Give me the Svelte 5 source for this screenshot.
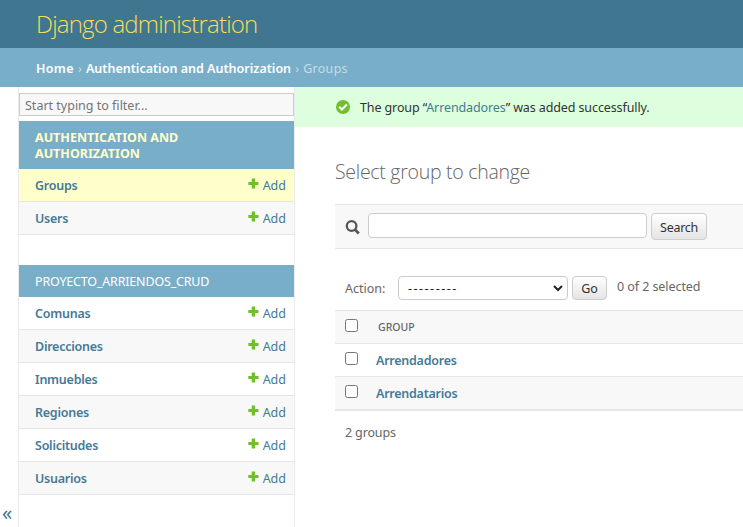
<script>
  const apps = [
    { name: 'Authentication and Authorization', current: true, models: ['Groups', 'Users'] },
    { name: 'proyecto_arriendos_crud', current: false, models: ['Comunas', 'Direcciones', 'Inmuebles', 'Regiones', 'Solicitudes', 'Usuarios'] }
  ];
  const groups = ['Arrendadores', 'Arrendatarios'];
</script>

<div class="page">
  <header><h1>Django administration</h1></header>
  <nav class="crumbs"><b>Home</b><i>›</i><b>Authentication and Authorization</b><i>›</i><span>Groups</span></nav>
  <div class="main">
    <div class="toggle">«</div>
    <aside>
      <input class="filter" placeholder="Start typing to filter..." />
      {#each apps as app}
        <section>
          <h2 class:current={app.current}>{app.name}</h2>
          {#each app.models as model, n}
            <div class="model" class:even={n % 2 === 1} class:selected={model === 'Groups'}>
              <b>{model}</b>
              <span class="add"><svg width="11" height="11" viewBox="0 0 11 11"><path d="M3.7 .5h3.4v3.4h3.4v3.2H7.1v3.4H3.7V7.1H.3V3.9h3.4z" fill="#70bf2b" /></svg><span>Add</span></span>
            </div>
          {/each}
        </section>
      {/each}
    </aside>
    <div class="content">
      <div class="message">
        <svg width="14" height="14" viewBox="0 0 14 14"><circle cx="7" cy="7" r="7" fill="#70bf2b" /><path d="M3.2 6.8l2.7 2.7 5-5" fill="none" stroke="#fff" stroke-width="2.2" /></svg>
        <p>The group “<em>Arrendadores</em>” was added successfully.</p>
      </div>
      <div class="body">
        <h3>Select group to change</h3>
        <div class="toolbar">
          <svg width="15" height="15" viewBox="0 0 15 15" fill="none" stroke="#555"><circle cx="6.6" cy="6" r="4.8" stroke-width="2.3" /><path d="M10 9.6l3.8 3.8" stroke-width="2.8" /></svg>
          <input class="query" />
          <button class="search">Search</button>
        </div>
        <div class="actions">
          <span class="label">Action:</span>
          <div class="select"><span>---------</span><svg width="10" height="7" viewBox="0 0 10 7"><path d="M1 1l4 4 4-4" fill="none" stroke="#222" stroke-width="2" /></svg></div>
          <button class="go">Go</button>
          <span class="count">0 of 2 selected</span>
        </div>
        <div class="table">
          <div class="tr head"><span class="box"></span><span class="th">GROUP</span></div>
          {#each groups as group, n}
            <div class="tr" class:even={n % 2 === 1}><span class="box"></span><b>{group}</b></div>
          {/each}
        </div>
        <p class="total">2 groups</p>
      </div>
    </div>
  </div>
</div>

<style>
  :global(body) { margin: 0; background: #fff; overflow: hidden; }
  .page { width: 743px; height: 527px; display: flex; flex-direction: column; overflow: hidden; font: 12.5px/16px "Noto Sans", "Open Sans", sans-serif; color: #333; white-space: nowrap; }
  .page * { box-sizing: border-box; }
  h1, h2, h3, p { margin: 0; font-weight: 400; }
  b { font-weight: 600; color: #457a95; letter-spacing: -0.25px; }
  input, button { font: inherit; margin: 0; outline: 0; }
  header { height: 48px; background: #417690; padding: 8px 0 0 36px; }
  h1 { font: 300 24px/32px "Open Sans", sans-serif; color: #f5dd5d; letter-spacing: -0.8px; }
  .crumbs { height: 39px; background: #79aec8; display: flex; align-items: center; padding: 2px 0 0 36px; color: #c4dce8; }
  .crumbs b { color: #fff; letter-spacing: 0.02px; }
  .crumbs b:first-child { letter-spacing: 0.35px; }
  .crumbs span { letter-spacing: 0.3px; }
  .crumbs i { font-style: normal; width: 12px; text-align: center; }
  .main { flex: 1; display: flex; min-height: 0; }
  .toggle { width: 19px; border-right: 1px solid #eaeaea; display: flex; align-items: flex-end; padding: 0 0 4px 2px; font-size: 20px; line-height: 20px; color: #417690; }
  aside { width: 276px; border-right: 1px solid #eaeaea; padding-top: 6px; }
  .filter { display: block; width: 275px; height: 23px; border: 1px solid #ccc; background: #f8f8f8; padding: 2px 5px 0; margin-bottom: 5px; border-radius: 0; }
  .filter::placeholder { color: #757575; opacity: 1; }
  section { margin-bottom: 30px; }
  h2 { background: #79aec8; color: #fff; padding: 9px 16px 7px; font-size: 12.5px; line-height: 16px; text-transform: uppercase; white-space: normal; letter-spacing: -0.18px; }
  h2.current { color: #ffc; font-weight: 700; padding-right: 90px; letter-spacing: 0; }
  .model { height: 33px; border-bottom: 1px solid #e6e6e6; display: flex; align-items: center; justify-content: space-between; padding: 2px 8px 0 16px; }
  .even { background: #f8f8f8; }
  .model.selected { background: #ffc; }
  .add { display: flex; color: #457a95; gap: 4px; }
  .content { flex: 1; min-width: 0; }
  .message { height: 40px; background: #dfd; display: flex; align-items: center; padding-left: 41px; gap: 10px; letter-spacing: -0.11px; }
  .message p { padding-top: 2px; }
  .message em { font-style: normal; color: #457a95; }
  .body { padding: 33px 0 0 40px; }
  h3 { font: 300 19.5px/24px "Open Sans", sans-serif; color: #666; letter-spacing: -0.28px; }
  .toolbar { margin-top: 20px; height: 45px; background: #f8f8f8; border-top: 1px solid #e6e6e6; border-bottom: 1px solid #e6e6e6; display: flex; align-items: flex-start; padding: 8px 0 0 10px; }
  .toolbar svg { margin: 7px 8px 0 0; }
  .query { width: 279px; height: 25px; border: 1px solid #ccc; border-radius: 4px; background: #fff; }
  button { border: 1px solid #ccc; border-radius: 4px; background: linear-gradient(#fff, #e4e4e4); color: #333; padding: 2px 0 0; }
  .search { width: 56px; height: 27px; margin-left: 4px; letter-spacing: -0.3px; }
  .actions { display: flex; padding: 27px 0 0 10px; height: 61px; color: #666; }
  .label { width: 53px; padding-top: 5px; }
  .select { width: 170px; height: 24px; border: 1px solid #ccc; border-radius: 4px; display: flex; align-items: center; justify-content: space-between; padding: 0 4px 0 9px; color: #222; }
  .select span { letter-spacing: 1.5px; padding-top: 2px; }
  .go { width: 35px; height: 24px; margin: 0 10px 0 4px; }
  .count { padding-top: 3px; letter-spacing: -0.07px; }
  .table { border-top: 1px solid #e6e6e6; border-bottom: 1px solid #e6e6e6; }
  .tr { height: 33px; border-bottom: 1px solid #e6e6e6; display: flex; padding-left: 10px; }
  .box { width: 13px; height: 13px; border: 1px solid #767676; border-radius: 2.5px; background: #fff; margin: 8px 18px 0 0; }
  .head { background: #f8f8f8; }
  .th { font-size: 10.5px; font-weight: 500; color: #666; margin: 8px 0 0 2px; }
  .tr b { margin-top: 9px; }
  .total { padding: 14px 10px; color: #666; letter-spacing: -0.15px; }
</style>
